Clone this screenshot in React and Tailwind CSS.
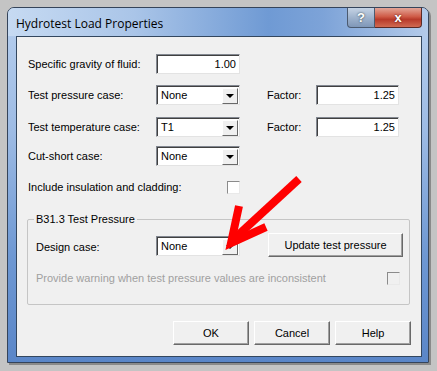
import React from "react";

const font = { fontFamily: '"Liberation Sans", Arial, sans-serif' };

function TextBox({ value, width = "w-[84px]" }) {
  return (
    <div className={`${width} h-[20px] bg-white border border-t-[#828790] border-l-[#828790] border-b-[#e3e3e3] border-r-[#e3e3e3] shadow-[inset_1px_1px_0_#404040] flex items-center justify-end pr-[3px] text-[11px]`}>
      {value}
    </div>
  );
}

function Combo({ value }) {
  return (
    <div className="w-[84px] h-[20px] bg-white border border-t-[#828790] border-l-[#828790] border-b-[#e3e3e3] border-r-[#e3e3e3] shadow-[inset_1px_1px_0_#404040] flex items-center text-[11px]">
      <span className="flex-1 pl-[4px] pt-[1px]">{value}</span>
      <div className="w-[16px] h-[16px] mr-[1px] mt-[1px] bg-[#f0f0f0] border border-t-[#ffffff] border-l-[#ffffff] border-b-[#696969] border-r-[#696969] flex items-center justify-center">
        <div className="w-0 h-0 border-l-[4px] border-r-[4px] border-t-[4px] border-l-transparent border-r-transparent border-t-black" />
      </div>
    </div>
  );
}

function Check({ disabled }) {
  return (
    <div
      className={`w-[13px] h-[13px] border border-t-[#8b8b8b] border-l-[#8b8b8b] border-b-[#e9e9e9] border-r-[#e9e9e9] ${
        disabled ? "bg-[#f0f0f0]" : "bg-white"
      }`}
    />
  );
}

function Button({ children, className = "" }) {
  return (
    <div
      className={`h-[24px] bg-[#f0f0f0] border border-t-[#ffffff] border-l-[#ffffff] border-b-[#696969] border-r-[#696969] shadow-[inset_-1px_-1px_0_#a0a0a0] flex items-center justify-center text-[11px] ${className}`}
    >
      {children}
    </div>
  );
}

export default function App() {
  return (
    <div className="relative w-[437px] h-[371px] bg-[#c4c4c4] pt-[7px] pl-[7px]" style={font}>
      <div className="w-[422px] h-[356px] rounded-t-[7px] border border-[#35445a] bg-[linear-gradient(to_bottom,#b7cfee_0%,#9dbbe4_35%,#6e98d3_70%,#5a86c8_100%)] flex flex-col shadow-[2px_2px_0_#8a8a8a]">
        {/* title bar */}
        <div className="h-[28px] flex items-start rounded-t-[6px] bg-[linear-gradient(to_right,#c6daf2_0%,#aac5e8_30%,#6f9ad4_62%,#7da3d8_75%,#b4cbea_100%)]">
          <div className="pl-[8px] pt-[7px] text-[12px] text-black" style={{ fontFamily: '"Open Sans", "Noto Sans", sans-serif' }}>
            Hydrotest Load Properties
          </div>
          <div className="ml-auto mr-[6px] flex">
            <div className="w-[28px] h-[20px] rounded-bl-[4px] border border-t-0 border-[#4b5a70] bg-[linear-gradient(to_bottom,#c5d3e4_0%,#9fb3cd_50%,#7f97b8_100%)] flex items-center justify-center text-white font-bold text-[13px]" style={{ textShadow: "0 0 2px #233" }}>
              ?
            </div>
            <div className="w-[47px] h-[20px] rounded-br-[4px] border border-t-0 border-l-0 border-[#5a2a26] bg-[linear-gradient(to_bottom,#e3a597_0%,#cf5b47_45%,#b83a2a_60%,#d06a52_100%)] flex items-center justify-center text-white font-bold text-[13px]" style={{ textShadow: "0 0 2px #411" }}>
              x
            </div>
          </div>
        </div>

        {/* client */}
        <div className="ml-[8px] mr-[6px] mb-[5px] flex-1 border border-[#33475f] bg-[#f0f0f0] text-[11px] text-black pl-[11px] pt-[17px]">
          <div className="flex items-center h-[20px]">
            <span className="w-[128px]">Specific gravity of fluid:</span>
            <TextBox value="1.00" />
          </div>
          <div className="flex items-center h-[20px] mt-[11px]">
            <span className="w-[128px]">Test pressure case:</span>
            <Combo value="None" />
            <span className="ml-[27px] w-[49px]">Factor:</span>
            <TextBox value="1.25" width="w-[83px]" />
          </div>
          <div className="flex items-center h-[20px] mt-[12px]">
            <span className="w-[128px]">Test temperature case:</span>
            <Combo value="T1" />
            <span className="ml-[27px] w-[49px]">Factor:</span>
            <TextBox value="1.25" width="w-[83px]" />
          </div>
          <div className="flex items-center h-[20px] mt-[9px]">
            <span className="w-[128px]">Cut-short case:</span>
            <Combo value="None" />
          </div>
          <div className="flex items-center h-[20px] mt-[11px]">
            <span className="w-[199px]">Include insulation and cladding:</span>
            <Check />
          </div>

          {/* group box */}
          <div className="mt-[22px] -ml-[1px] w-[383px] h-[86px] border border-[#c5c5c5] rounded-[2px] pl-[8px]">
            <div className="-mt-[8px] -ml-[2px] px-[2px] bg-[#f0f0f0] w-fit h-[14px] leading-[14px]">
              B31.3 Test Pressure
            </div>
            <div className="flex items-start mt-[7px]">
              <span className="w-[120px] mt-[6px]">Design case:</span>
              <div className="mt-[3px]">
                <Combo value="None" />
              </div>
              <Button className="ml-[28px] w-[135px] h-[22px] border-[#3c3c3c] border-t-[#9a9a9a] border-l-[#9a9a9a]">
                Update test pressure
              </Button>
            </div>
            <div className="flex items-center h-[20px] mt-[11px] text-[#a0a0a0]">
              <span className="w-[351px]">Provide warning when test pressure values are inconsistent</span>
              <Check disabled />
            </div>
          </div>

          <div className="flex justify-end gap-[5px] mt-[16px] mr-[10px]">
            <Button className="w-[76px]">OK</Button>
            <Button className="w-[76px]">Cancel</Button>
            <Button className="w-[76px]">Help</Button>
          </div>
        </div>
      </div>

      {/* red annotation arrow */}
      <svg className="absolute left-0 top-0 pointer-events-none" width="437" height="371" viewBox="0 0 437 371">
        <line x1="299" y1="179" x2="236" y2="237" stroke="#ff0000" strokeWidth="8" strokeLinecap="butt" />
        <polyline points="239,206 231,243 266,227" fill="none" stroke="#ff0000" strokeWidth="8" strokeLinejoin="miter" strokeMiterlimit="10" />
      </svg>
    </div>
  );
}
